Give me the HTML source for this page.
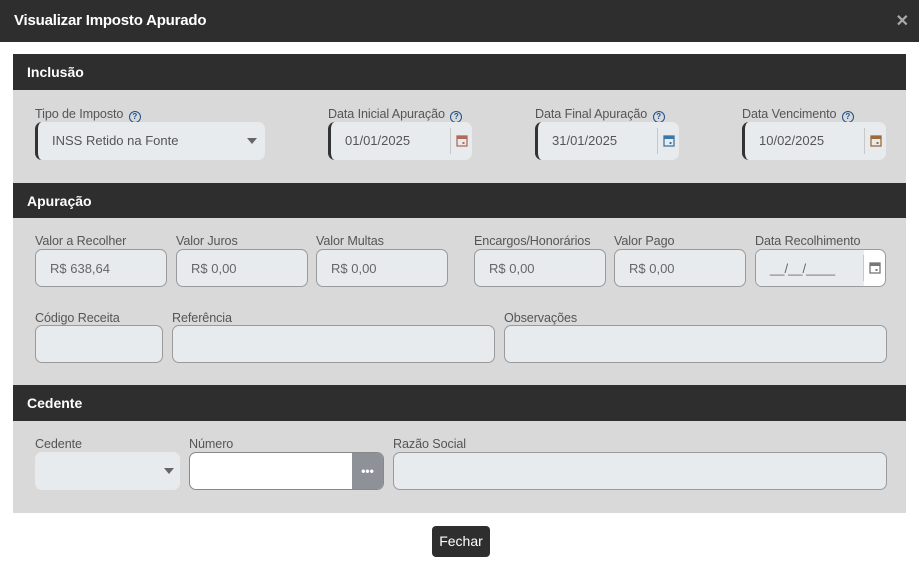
<!DOCTYPE html>
<html><head><meta charset="utf-8"><style>
*{box-sizing:border-box;margin:0;padding:0}
body{width:919px;height:573px;background:#fff;font-family:"Liberation Sans",sans-serif;position:relative;overflow:hidden}
.a{position:absolute}
.hdr{left:0;top:0;width:919px;height:42px;background:#2e2e2e;color:#fff;font-weight:bold;font-size:15px;padding:12px 14px;letter-spacing:-0.2px}
.x{right:10px;top:11px;color:#aaa;font-size:16px;font-weight:bold}
.bar{left:13px;width:893px;height:36px;background:#2e2e2e;color:#fff;font-weight:bold;font-size:14px;padding:10px 14px}
.gray{left:13px;width:893px;background:#d9d9d9}
.lb{font-size:12.6px;color:#555;letter-spacing:-0.1px}
.in{height:38px;background:#e8ebee;border:1px solid #9a9a9a;border-radius:7px;font-size:13px;color:#666;padding:11px 14px}
.q{display:inline-block;width:12px;height:12px;border:1.3px solid #1f4f8a;border-radius:50%;font-size:8px;line-height:10px;text-align:center;color:#1f4f8a;font-weight:bold;vertical-align:-1px;margin-left:2px}
.dt{height:38px;background:#e8ebee;border-radius:7px;border-left:3px solid #333;font-size:13px;color:#555;padding:11px 14px}
.cal{position:absolute;right:0;top:6px;width:22px;height:26px;border-left:1px solid #c8c8c8}
.cal svg{position:absolute;left:5px;top:6px}
</style></head><body>
<div class="a hdr">Visualizar Imposto Apurado</div>
<div class="a x">✕</div>

<div class="a bar" style="top:54px">Inclusão</div>
<div class="a gray" style="top:90px;height:93px"></div>
<div class="a bar" style="top:183px">Apuração</div>
<div class="a gray" style="top:218px;height:167px"></div>
<div class="a bar" style="top:385px">Cedente</div>
<div class="a gray" style="top:421px;height:92px"></div>

<div class="a lb" style="left:35px;top:107px">Tipo de Imposto <span class="q">?</span></div>
<div class="a dt" style="left:35px;top:122px;width:230px">INSS Retido na Fonte<span class="a" style="top:16px;border:5px solid transparent;border-top:6px solid #666;border-bottom:0;right:8px"></span></div>
<div class="a lb" style="left:328px;top:107px">Data Inicial Apuração <span class="q">?</span></div>
<div class="a dt" style="left:328px;top:122px;width:144px">01/01/2025<div class="cal"><svg width="12" height="13" viewBox="0 0 12 13"><rect x="1" y="2" width="10" height="10" fill="none" stroke="#b36a5a" stroke-width="1.3"/><rect x="1" y="2" width="10" height="3" fill="#b36a5a"/><rect x="6.5" y="8" width="2" height="2" fill="#b36a5a"/></svg></div></div>
<div class="a lb" style="left:535px;top:107px">Data Final Apuração <span class="q">?</span></div>
<div class="a dt" style="left:535px;top:122px;width:144px">31/01/2025<div class="cal"><svg width="12" height="13" viewBox="0 0 12 13"><rect x="1" y="2" width="10" height="10" fill="none" stroke="#3a78a8" stroke-width="1.3"/><rect x="1" y="2" width="10" height="3" fill="#3a78a8"/><rect x="6.5" y="8" width="2" height="2" fill="#3a78a8"/></svg></div></div>
<div class="a lb" style="left:742px;top:107px">Data Vencimento <span class="q">?</span></div>
<div class="a dt" style="left:742px;top:122px;width:144px">10/02/2025<div class="cal"><svg width="12" height="13" viewBox="0 0 12 13"><rect x="1" y="2" width="10" height="10" fill="none" stroke="#9a6a3a" stroke-width="1.3"/><rect x="1" y="2" width="10" height="3" fill="#9a6a3a"/><rect x="6.5" y="8" width="2" height="2" fill="#9a6a3a"/></svg></div></div>

<div class="a lb" style="left:35px;top:234px">Valor a Recolher</div>
<div class="a in" style="left:35px;top:249px;width:132px">R$ 638,64</div>
<div class="a lb" style="left:176px;top:234px">Valor Juros</div>
<div class="a in" style="left:176px;top:249px;width:132px">R$ 0,00</div>
<div class="a lb" style="left:316px;top:234px">Valor Multas</div>
<div class="a in" style="left:316px;top:249px;width:132px">R$ 0,00</div>
<div class="a lb" style="left:474px;top:234px">Encargos/Honorários</div>
<div class="a in" style="left:474px;top:249px;width:132px">R$ 0,00</div>
<div class="a lb" style="left:614px;top:234px">Valor Pago</div>
<div class="a in" style="left:614px;top:249px;width:132px">R$ 0,00</div>
<div class="a lb" style="left:755px;top:234px">Data Recolhimento</div>
<div class="a in" style="left:755px;top:249px;width:131px;background:#fff;padding:0">
<div class="a" style="left:0;top:0;width:108px;height:36px;background:#e8ebee;border-radius:6px 0 0 6px;padding:11px 14px">__/__/____</div>
<div class="cal" style="top:5px"><svg width="12" height="13" viewBox="0 0 12 13"><rect x="1" y="2" width="10" height="10" fill="none" stroke="#777" stroke-width="1.3"/><rect x="1" y="2" width="10" height="3" fill="#777"/><rect x="6.5" y="8" width="2" height="2" fill="#777"/></svg></div></div>

<div class="a lb" style="left:35px;top:311px">Código Receita</div>
<div class="a in" style="left:35px;top:325px;width:128px"></div>
<div class="a lb" style="left:172px;top:311px">Referência</div>
<div class="a in" style="left:172px;top:325px;width:323px"></div>
<div class="a lb" style="left:504px;top:311px">Observações</div>
<div class="a in" style="left:504px;top:325px;width:383px"></div>

<div class="a lb" style="left:35px;top:437px">Cedente</div>
<div class="a" style="left:35px;top:452px;width:145px;height:38px;background:#e8ebee;border-radius:7px"><span class="a" style="right:6px;top:16px;border:5px solid transparent;border-top:6px solid #666;border-bottom:0"></span></div>
<div class="a lb" style="left:189px;top:437px">Número</div>
<div class="a" style="left:189px;top:452px;width:195px;height:38px;background:#fff;border:1px solid #888;border-radius:7px;overflow:hidden"><div class="a" style="right:0;top:0;width:31px;height:36px;background:#8e9298;color:#fff;font-size:12px;font-weight:bold;text-align:center;line-height:36px">•••</div></div>
<div class="a lb" style="left:393px;top:437px">Razão Social</div>
<div class="a in" style="left:393px;top:452px;width:494px"></div>

<div class="a" style="left:432px;top:526px;width:58px;height:31px;background:#2e2e2e;border-radius:4px;color:#fff;font-size:14px;text-align:center;line-height:31px">Fechar</div>
</body></html>
